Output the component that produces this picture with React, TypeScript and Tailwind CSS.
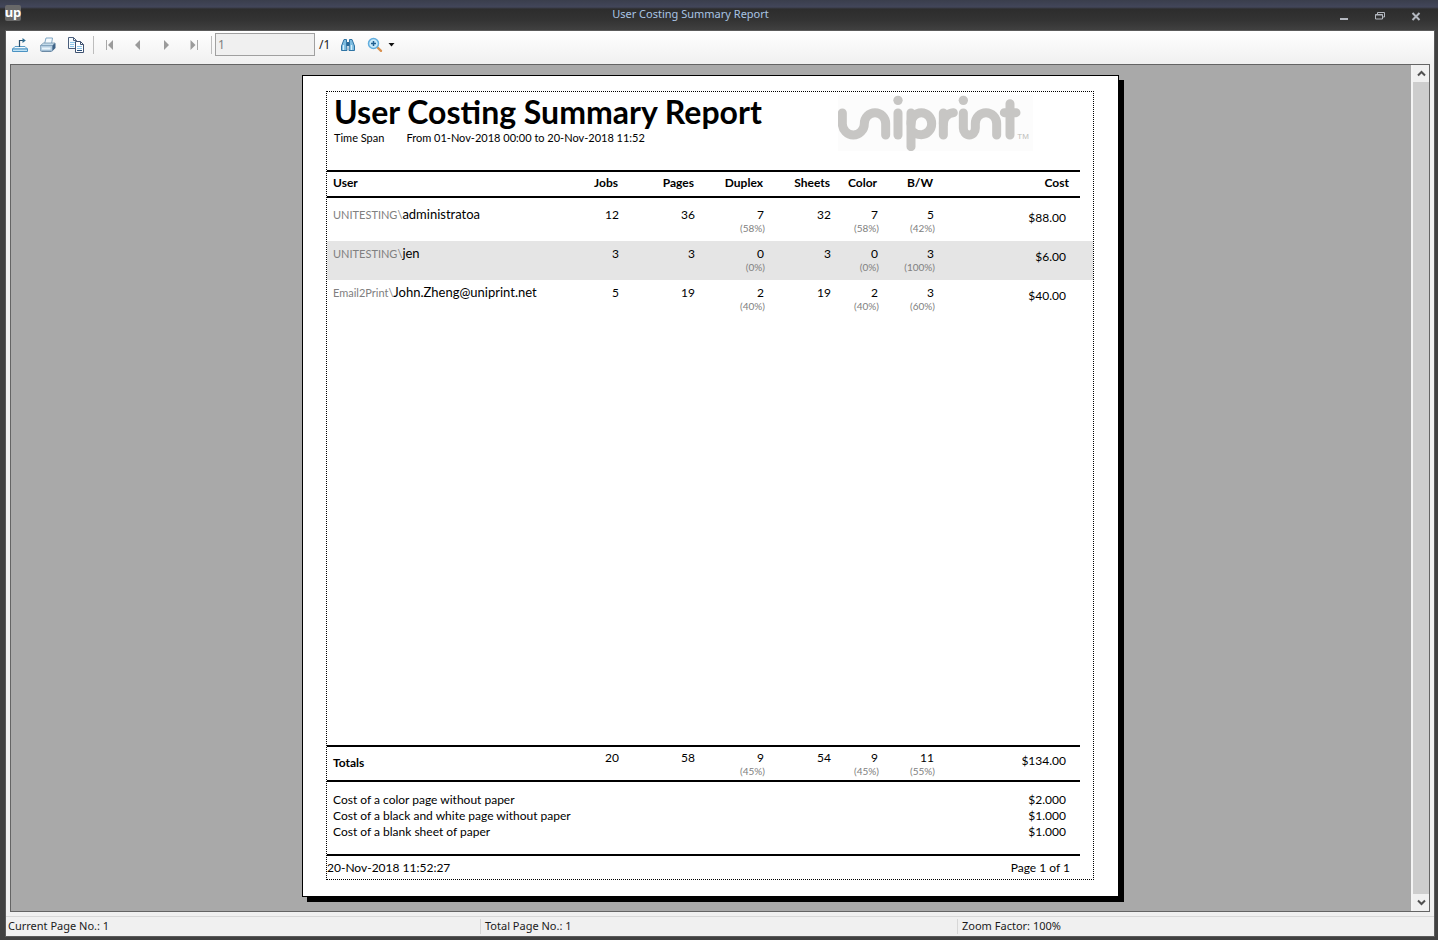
import type { ReactNode } from "react";

type Share = { value: string; percent: string };

type Row = {
  domain?: string;
  name: string;
  jobs: string;
  pages: string;
  duplex: Share;
  sheets: string;
  color: Share;
  bw: Share;
  cost: string;
};

const rows: Row[] = [
  {
    domain: "UNITESTING\\",
    name: "administratoa",
    jobs: "12",
    pages: "36",
    duplex: { value: "7", percent: "(58%)" },
    sheets: "32",
    color: { value: "7", percent: "(58%)" },
    bw: { value: "5", percent: "(42%)" },
    cost: "$88.00",
  },
  {
    domain: "UNITESTING\\",
    name: "jen",
    jobs: "3",
    pages: "3",
    duplex: { value: "0", percent: "(0%)" },
    sheets: "3",
    color: { value: "0", percent: "(0%)" },
    bw: { value: "3", percent: "(100%)" },
    cost: "$6.00",
  },
  {
    domain: "Email2Print\\",
    name: "John.Zheng@uniprint.net",
    jobs: "5",
    pages: "19",
    duplex: { value: "2", percent: "(40%)" },
    sheets: "19",
    color: { value: "2", percent: "(40%)" },
    bw: { value: "3", percent: "(60%)" },
    cost: "$40.00",
  },
];

const totals: Row = {
  name: "Totals",
  jobs: "20",
  pages: "58",
  duplex: { value: "9", percent: "(45%)" },
  sheets: "54",
  color: { value: "9", percent: "(45%)" },
  bw: { value: "11", percent: "(55%)" },
  cost: "$134.00",
};

const rates = [
  ["Cost of a color page without paper", "$2.000"],
  ["Cost of a black and white page without paper", "$1.000"],
  ["Cost of a blank sheet of paper", "$1.000"],
];

function ExportIcon() {
  return (
    <svg width="18" height="18" viewBox="0 0 18 18" fill="none">
      <path d="M4 10.500h10l2.500 2.500H1.500z" fill="#f2f9fd" stroke="#5a9cc8" />
      <path d="M1.500 13h15v2.500h-15z" fill="#bfe2f5" stroke="#4b92c2" />
      <path d="M8.500 11V4.500h4" stroke="#28506e" strokeWidth="1.200" />
      <path d="M11.500 2l3.300 2.500-3.300 2.500z" fill="#2f6f94" />
    </svg>
  );
}

function PrintIcon() {
  return (
    <svg width="18" height="18" viewBox="0 0 18 18" fill="none">
      <path d="M5.500 8L7 2h6.500l-1 6z" fill="#f4fafe" stroke="#7fa6c4" />
      <path d="M1.500 9.500L4.500 7h11.500l-2.500 2.500z" fill="#c3daea" stroke="#7192ab" strokeWidth=".8" />
      <path d="M1.500 9.500h12v5.500h-12z" fill="#b4cde1" stroke="#7f9fba" strokeWidth=".8" />
      <path d="M13.500 9.500L16.500 7v5l-3 3z" fill="#3f6488" />
      <path d="M3 11.500h8.500v2H3z" fill="#e9f4fb" />
      <path d="M2.500 15.500h10" stroke="#6c8aa5" />
    </svg>
  );
}

function CopyIcon() {
  return (
    <svg width="18" height="18" viewBox="0 0 18 18" fill="none">
      <path d="M1.500 1.500h5l3 3v8h-8z" fill="#f5fafd" stroke="#4b5f7c" />
      <path d="M6.500 1.500v3h3" stroke="#4b5f7c" />
      <path d="M3 6.500h5M3 8.500h4M3 10.500h4" stroke="#8cc6ea" />
      <path d="M8.500 5.500h5l3 3v8h-8z" fill="#fff" stroke="#3f5270" />
      <path d="M13.500 5.500v3h3" stroke="#3f5270" />
      <path d="M10 10.500h5M10 12.500h5" stroke="#8cc6ea" />
      <path d="M10 14.500h5" stroke="#274f7c" />
    </svg>
  );
}

function NavIcon({ d, bar }: { d: string; bar?: string }) {
  return (
    <svg width="10" height="12" viewBox="0 0 10 12" fill="none">
      <path d={d} fill="#9b9b9b" />
      {bar && <path d={bar} stroke="#a8a8a8" strokeWidth="1" />}
    </svg>
  );
}

function BinocularsIcon() {
  return (
    <svg width="16" height="14" viewBox="0 0 16 14" fill="none">
      <path d="M4 1.500h2.500v3l.5 8H1.500V8z" fill="#7dbce0" stroke="#2f74a4" />
      <path d="M12 1.500H9.500v3l-.5 8h5.500V8z" fill="#7dbce0" stroke="#2f74a4" />
      <path d="M6.500 4h3v4h-3z" fill="#2b6a98" />
      <path d="M3.500 7v5M11.500 7v5" stroke="#d7effb" strokeWidth="1.300" />
    </svg>
  );
}

function ZoomIcon() {
  return (
    <svg width="16" height="16" viewBox="0 0 16 16" fill="none">
      <path d="M10 10l4 3.800" stroke="#d8904e" strokeWidth="2.400" strokeLinecap="round" />
      <circle cx="6.500" cy="6.500" r="5" fill="#c9e9fa" stroke="#62aede" strokeWidth="1.500" />
      <path d="M6.500 4v5M4 6.500h5" stroke="#1f5f92" strokeWidth="1.500" />
    </svg>
  );
}

function UniprintLogo() {
  return (
    <svg width="195" height="56" viewBox="54 74 585 168" role="img" aria-label="uniprint">
      <rect x="54" y="74" width="585" height="168" fill="#fcfcfc" />
      <g fill="none" stroke="#c7c6c4" strokeWidth="27" strokeLinecap="round">
        <path d="M67 128V160A33 34 0 0 0 133 160A32 33 0 0 1 197 160V194" />
        <path d="M234 128V194" />
        <path d="M273 229V160A31 33 0 1 1 304 193Q286 193 273 180" />
        <path d="M273 128V160" />
        <path d="M370 194V160A32 33 0 0 1 400 127" />
        <path d="M370 128V160" />
        <path d="M430 128V174A18 20 0 0 0 466 174V160A32 33 0 0 1 530 160V194" />
        <path d="M570 100V194M553 127H588" />
      </g>
      <circle cx="234" cy="90" r="14" fill="#c7c6c4" />
      <circle cx="430" cy="90" r="14" fill="#c7c6c4" />
      <text x="592" y="205" fontSize="24" fill="#bdbcba" fontFamily="Liberation Sans, sans-serif">
        TM
      </text>
    </svg>
  );
}

function ToolButton({ label, className, children }: { label: string; className: string; children: ReactNode }) {
  return (
    <button type="button" aria-label={label} className={`flex h-6 shrink-0 items-center ${className}`}>
      {children}
    </button>
  );
}

function Columns() {
  return (
    <colgroup>
      <col />
      <col className="w-[70px]" />
      <col className="w-[76px]" />
      <col className="w-[70px]" />
      <col className="w-[66px]" />
      <col className="w-[48px]" />
      <col className="w-[56px]" />
      <col className="w-[145px]" />
      <col className="w-[13px]" />
    </colgroup>
  );
}

function ShareCell({ share, top }: { share: Share; top: string }) {
  return (
    <td className={`${top} text-right`}>
      <div className="pr-px leading-[14px]">{share.value}</div>
      <div className="text-[10px] leading-3 text-[#808080]">{share.percent}</div>
    </td>
  );
}

function Figures({ row, top, costTop }: { row: Row; top: string; costTop: string }) {
  return (
    <>
      <td className={`${top} text-right leading-[14px]`}>{row.jobs}</td>
      <td className={`${top} text-right leading-[14px]`}>{row.pages}</td>
      <ShareCell share={row.duplex} top={top} />
      <td className={`${top} text-right leading-[14px]`}>{row.sheets}</td>
      <ShareCell share={row.color} top={top} />
      <ShareCell share={row.bw} top={top} />
      <td className={`${costTop} pr-[14px] text-right leading-[14px]`}>{row.cost}</td>
      <td />
    </>
  );
}

const rule = "border-y-2 border-black pb-[2px]";

function Report() {
  return (
    <article className="flex w-[817px] flex-col border border-black bg-white pt-[15px] pr-6 pb-4 pl-[23px] font-[Lato,'Liberation_Sans',sans-serif] text-xs text-black shadow-[5px_5px_0_#000]">
      <div className="flex flex-1 flex-col border border-dotted border-black">
        <header className="flex h-[78px] items-start justify-between pr-[60px] pl-[7px]">
          <div>
            <h1 className="pt-[2px] text-[32px] leading-9 font-bold whitespace-nowrap">User Costing Summary Report</h1>
            <p className="flex gap-[22px] text-[11px] leading-4">
              <span>Time Span</span>
              <span>From 01-Nov-2018 00:00 to 20-Nov-2018 11:52</span>
            </p>
          </div>
          <div className="pt-[3px]">
            <UniprintLogo />
          </div>
        </header>

        <table className="w-full table-fixed border-separate border-spacing-0">
          <Columns />
          <thead>
            <tr className="h-7 text-right font-bold">
              <th className={`${rule} pl-[6px] text-left`}>User</th>
              <th className={`${rule} pr-px`}>Jobs</th>
              <th className={`${rule} pr-px`}>Pages</th>
              <th className={`${rule} pr-[2px]`}>Duplex</th>
              <th className={`${rule} pr-px`}>Sheets</th>
              <th className={`${rule} pr-[2px]`}>Color</th>
              <th className={`${rule} pr-[2px]`}>B/W</th>
              <th className={`${rule} pr-[11px]`}>Cost</th>
              <td />
            </tr>
          </thead>
          <tbody>
            <tr className="h-1">
              <td colSpan={9} />
            </tr>
            {rows.map((row) => (
              <tr key={row.name} className="h-[39px] align-top even:bg-white odd:bg-[#e5e5e5]">
                <td className="pt-[5px] pl-[6px] text-[13px] leading-[14px] whitespace-nowrap">
                  <span className="text-[11px] text-[#808080]">{row.domain}</span>
                  {row.name}
                </td>
                <Figures row={row} top="pt-[6px]" costTop="pt-[9px]" />
              </tr>
            ))}
          </tbody>
        </table>

        <div className="mt-auto mr-[13px] border-t-2 border-black" />
        <table className="w-full table-fixed border-separate border-spacing-0">
          <Columns />
          <tbody>
            <tr className="h-[33px] align-top">
              <th className="pt-[9px] pl-[6px] text-left leading-[14px] font-bold">{totals.name}</th>
              <Figures row={totals} top="pt-1" costTop="pt-[7px]" />
            </tr>
          </tbody>
        </table>
        <dl className="mr-[13px] border-y-2 border-black pt-[10px] pr-[14px] pb-[14px] pl-[6px] leading-4">
          {rates.map(([label, value]) => (
            <div key={label} className="flex justify-between">
              <dt>{label}</dt>
              <dd>{value}</dd>
            </div>
          ))}
        </dl>
        <footer className="mr-[13px] flex h-[23px] items-center justify-between pr-[10px]">
          <span>20-Nov-2018 11:52:27</span>
          <span>Page 1 of 1</span>
        </footer>
      </div>
    </article>
  );
}

export default function App() {
  return (
    <div className="flex min-h-screen flex-col bg-[#404040] font-['Noto_Sans','Open_Sans',sans-serif] text-xs text-[#1b1b1b]">
      <header className="flex h-[30px] items-center bg-[linear-gradient(#3a3e4c_0px,#42465a_7px,#2d2d2d_9px,#333_20px,#404040_30px)] pr-[14px] pl-[5px]">
        <span className="mb-1 flex h-4 w-4 items-center justify-center rounded-xs bg-[#686868] pb-[2px] text-[13px] leading-none font-bold text-white">
          up
        </span>
        <h2 className="flex-1 pb-[2px] pl-6 text-center text-[11px] text-[#a9c4e4]">User Costing Summary Report</h2>
        <div className="flex items-center justify-end gap-5 pt-[2px]">
          <button type="button" aria-label="Minimize" className="flex h-4 w-4 items-center justify-center">
            <svg width="8" height="10" viewBox="0 0 8 10">
              <path d="M0 7h8v2H0z" fill="#b4b8c0" />
            </svg>
          </button>
          <button type="button" aria-label="Restore" className="flex h-4 w-4 items-center justify-center">
            <svg width="10" height="8" viewBox="0 0 10 8" fill="none" stroke="#b4b8c0">
              <path d="M2.500 2V.5h7v4.500H8" />
              <path d="M.5 2.500h7v4.500h-7z" />
              <path d="M.5 3h7" />
            </svg>
          </button>
          <button type="button" aria-label="Close" className="flex h-4 w-4 items-center justify-center">
            <svg width="10" height="9" viewBox="0 0 10 9">
              <path d="M1.500 1l7 7M8.500 1l-7 7" stroke="#b4b8c0" strokeWidth="2" />
            </svg>
          </button>
        </div>
      </header>

      <div className="mr-[3px] mb-[3px] ml-[5px] flex flex-1 flex-col border border-[#5a5a5a] bg-[#f0f0f0]">
        <div role="toolbar" aria-label="Report" className="flex h-[33px] items-center bg-linear-to-b from-white to-[#f0f0f0] pb-[6px] pl-[2px]">
          <ToolButton label="Export report" className="w-6 justify-center">
            <ExportIcon />
          </ToolButton>
          <ToolButton label="Print report" className="ml-1 w-6 justify-center">
            <PrintIcon />
          </ToolButton>
          <ToolButton label="Copy" className="ml-1 w-6 justify-center">
            <CopyIcon />
          </ToolButton>
          <span className="mx-[5px] h-[18px] w-px bg-[#bdbdbd]" />
          <ToolButton label="First page" className="w-[22px] justify-center">
            <NavIcon d="M8 1v10L3 6z" bar="M1.500 1v10" />
          </ToolButton>
          <ToolButton label="Previous page" className="ml-[6px] w-[22px] justify-center">
            <NavIcon d="M7 1v10L2 6z" />
          </ToolButton>
          <ToolButton label="Next page" className="ml-[6px] w-[22px] justify-center">
            <NavIcon d="M3 1v10l5-5z" />
          </ToolButton>
          <ToolButton label="Last page" className="ml-[6px] w-[22px] justify-center">
            <NavIcon d="M1.500 1v10l5-5z" bar="M8.500 1v10" />
          </ToolButton>
          <span className="mr-[3px] ml-[6px] h-[18px] w-px bg-[#bdbdbd]" />
          <input
            aria-label="Page number"
            defaultValue="1"
            className="h-[23px] w-[100px] border border-[#a0a0a0] bg-[#f0f0f0] px-[2px] text-xs text-[#808080] outline-none"
          />
          <span className="ml-1 w-4">/1</span>
          <ToolButton label="Find text" className="w-[26px] justify-center">
            <BinocularsIcon />
          </ToolButton>
          <ToolButton label="Zoom" className="ml-[6px] w-[30px] gap-[5px]">
            <ZoomIcon />
            <svg width="7" height="4" viewBox="0 0 7 4">
              <path d="M.5 0h6l-3 3.500z" fill="#111" />
            </svg>
          </ToolButton>
        </div>

        <main className="mr-1 ml-1 flex flex-1 border border-[#646464] bg-[#a9a9a9]">
          <div className="flex flex-1 justify-center pt-[10px] pb-[14px]">
            <Report />
          </div>
          <div className="ml-px flex w-[18px] flex-col border-l-2 border-[#f4f4f4] bg-[#cdcdcd]">
            <button type="button" aria-label="Scroll up" className="flex h-[17px] items-center justify-center bg-[#f0f0f0]">
              <svg width="9" height="7" viewBox="0 0 9 7">
                <path d="M1 5.500l3.500-3.500L8 5.500" fill="none" stroke="#505050" strokeWidth="2" />
              </svg>
            </button>
            <div className="flex-1" />
            <button type="button" aria-label="Scroll down" className="flex h-[17px] items-center justify-center bg-[#f0f0f0]">
              <svg width="9" height="7" viewBox="0 0 9 7">
                <path d="M1 1.500L4.500 5 8 1.500" fill="none" stroke="#505050" strokeWidth="2" />
              </svg>
            </button>
          </div>
        </main>

        <footer className="mt-1 flex h-5 items-center border-t border-[#d7d7d7] text-[11px]">
          <span className="flex-1 pl-[2px]">Current Page No.: 1</span>
          <span className="flex-1 border-l border-[#d7d7d7] pl-1">Total Page No.: 1</span>
          <span className="flex-1 border-l border-[#d7d7d7] pl-1">Zoom Factor: 100%</span>
        </footer>
      </div>
    </div>
  );
}
